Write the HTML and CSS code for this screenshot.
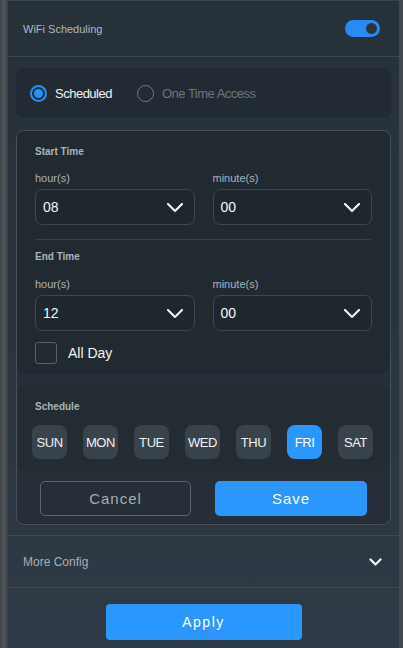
FILE: index.html
```html
<!DOCTYPE html>
<html>
<head>
<meta charset="utf-8">
<link rel="stylesheet" href="styles.css">
</head>
<body>
<div class="panel">
  <div class="header">
    <span class="header-title">WiFi Scheduling</span>
    <span class="toggle"><span class="knob"></span></span>
  </div>

  <div class="radio-box">
    <span class="radio on"><span class="dot"></span></span>
    <span class="radio-label on-label">Scheduled</span>
    <span class="radio off"></span>
    <span class="radio-label off-label">One Time Access</span>
  </div>

  <div class="card">
    <div class="times">
      <div class="sec-title">Start Time</div>
      <div class="field-row">
        <div class="field">
          <div class="field-label">hour(s)</div>
          <div class="select"><span>08</span>
            <svg width="16" height="9" viewBox="0 0 16 9"><path d="M1 1 L8 8 L15 1" fill="none" stroke="#fff" stroke-width="2" stroke-linecap="round" stroke-linejoin="round"/></svg>
          </div>
        </div>
        <div class="field">
          <div class="field-label">minute(s)</div>
          <div class="select"><span>00</span>
            <svg width="16" height="9" viewBox="0 0 16 9"><path d="M1 1 L8 8 L15 1" fill="none" stroke="#fff" stroke-width="2" stroke-linecap="round" stroke-linejoin="round"/></svg>
          </div>
        </div>
      </div>
      <div class="divider"></div>
      <div class="sec-title end">End Time</div>
      <div class="field-row">
        <div class="field">
          <div class="field-label second">hour(s)</div>
          <div class="select"><span>12</span>
            <svg width="16" height="9" viewBox="0 0 16 9"><path d="M1 1 L8 8 L15 1" fill="none" stroke="#fff" stroke-width="2" stroke-linecap="round" stroke-linejoin="round"/></svg>
          </div>
        </div>
        <div class="field">
          <div class="field-label second">minute(s)</div>
          <div class="select"><span>00</span>
            <svg width="16" height="9" viewBox="0 0 16 9"><path d="M1 1 L8 8 L15 1" fill="none" stroke="#fff" stroke-width="2" stroke-linecap="round" stroke-linejoin="round"/></svg>
          </div>
        </div>
      </div>
      <div class="check-row">
        <span class="checkbox"></span>
        <span class="check-label">All Day</span>
      </div>
    </div>

    <div class="schedule">
      <div class="sec-title">Schedule</div>
      <div class="days">
        <span class="day">SUN</span>
        <span class="day">MON</span>
        <span class="day">TUE</span>
        <span class="day">WED</span>
        <span class="day">THU</span>
        <span class="day active">FRI</span>
        <span class="day">SAT</span>
      </div>
    </div>

    <div class="actions">
      <button class="btn cancel">Cancel</button>
      <button class="btn save">Save</button>
    </div>
  </div>

  <div class="more">
    <span class="more-label">More Config</span>
    <svg width="13" height="8" viewBox="0 0 13 8"><path d="M1.5 1.5 L6.5 6.5 L11.5 1.5" fill="none" stroke="#fff" stroke-width="2.2" stroke-linecap="round" stroke-linejoin="round"/></svg>
  </div>

  <div class="apply-wrap">
    <button class="apply">Apply</button>
  </div>
</div>
</body>
</html>
```

FILE: styles.css
```css
* { box-sizing: border-box; }
html, body {
  margin: 0;
  padding: 0;
  height: 648px;
  overflow: hidden;
}
body {
  background: linear-gradient(90deg, #3b4348 0px, #4d555a 3px, #454d52 6px, #353d43 8px);
  font-family: "Liberation Sans", Arial, sans-serif;
}
.panel {
  margin-left: 8px;
  width: 391px;
  height: 648px;
  background: linear-gradient(180deg, #27313a 0%, #29343e 50%, #2e3a45 100%);
  border-top: 1px solid #3a444c;
  box-shadow: 4px 0 0 #40484e;
}
.header {
  height: 56px;
  display: flex;
  align-items: center;
  justify-content: space-between;
  padding: 0 19px 0 15px;
  border-bottom: 1px solid #3b4650;
}
.header-title {
  font-size: 11px;
  color: #aeb8c1;
}
.toggle {
  width: 35px;
  height: 17px;
  border-radius: 9px;
  background: #2a8af4;
  display: flex;
  align-items: center;
  justify-content: flex-end;
  padding-right: 3px;
}
.knob {
  width: 11px;
  height: 11px;
  border-radius: 50%;
  background: #2b343c;
}
.radio-box {
  margin: 11px 8px 0;
  height: 50px;
  border-radius: 7px;
  background: #222b33;
  display: flex;
  align-items: center;
  padding-left: 14px;
}
.radio {
  width: 17px;
  height: 17px;
  border-radius: 50%;
  display: flex;
  align-items: center;
  justify-content: center;
}
.radio.on { border: 2px solid #2a90f6; }
.dot { width: 9px; height: 9px; border-radius: 50%; background: #2a90f6; }
.radio.off { border: 1.5px solid #737c84; margin-left: 25px; }
.radio-label { font-size: 13px; margin-left: 8px; letter-spacing: -0.5px; }
.on-label { color: #f2f4f6; }
.off-label { color: #6b757e; }

.card {
  margin: 12px 8px 0;
  border: 1px solid #46515a;
  border-radius: 8px;
  background: #262f37;
  overflow: hidden;
}
.times {
  background: #212a31;
  border-radius: 0 0 9px 9px;
  padding: 14px 18px 10px;
}
.sec-title {
  font-size: 10px;
  line-height: 14px;
  font-weight: bold;
  color: #a9b4be;
}
.sec-title.end { margin-top: 10px; }
.field-row {
  display: flex;
  gap: 18px;
}
.field { width: 160px; }
.field-label {
  margin-top: 12px;
  font-size: 11px;
  line-height: 14px;
  color: #aab3bb;
}
.field-label.second { margin-top: 13px; }
.select {
  margin-top: 4px;
  height: 36px;
  border: 1px solid #3c4750;
  border-radius: 7px;
  background: #1f272e;
  display: flex;
  align-items: center;
  justify-content: space-between;
  padding: 0 11px 0 7px;
  font-size: 14px;
  color: #f4f6f8;
}
.divider {
  margin-top: 14px;
  height: 1px;
  width: 336px;
  background: #38424a;
}
.check-row {
  margin-top: 11px;
  display: flex;
  align-items: center;
}
.checkbox {
  width: 22px;
  height: 22px;
  border: 1px solid #58636c;
  border-radius: 3px;
}
.check-label {
  margin-left: 11px;
  font-size: 14px;
  color: #f2f4f6;
}

.schedule {
  margin-top: 11px;
  background: #232c33;
  border-radius: 10px;
  padding: 15px 15px 13px;
}
.schedule .sec-title { padding-left: 3px; }
.days {
  margin-top: 11px;
  display: flex;
  gap: 16px;
}
.day {
  width: 35px;
  height: 34px;
  border-radius: 8px;
  background: #39434b;
  color: #eef1f3;
  font-size: 13px;
  letter-spacing: -0.4px;
  display: flex;
  align-items: center;
  justify-content: center;
}
.day.active { background: #2b96fb; color: #fff; }

.actions {
  margin-top: 9px;
  padding: 0 23px 8px;
  display: flex;
  gap: 24px;
}
.btn {
  height: 35px;
  border-radius: 5px;
  font-family: "Liberation Sans", Arial, sans-serif;
  font-size: 15px;
  letter-spacing: 1px;
  cursor: pointer;
}
.cancel {
  width: 151px;
  background: transparent;
  border: 1px solid #5b6670;
  color: #a3adb6;
}
.save {
  width: 152px;
  background: #2b96fb;
  border: none;
  color: #fff;
}

.more {
  margin-top: 10px;
  height: 53px;
  border-top: 1px solid #3e4a55;
  border-bottom: 1px solid #3e4a55;
  display: flex;
  align-items: center;
  justify-content: space-between;
  padding: 0 17px 0 15px;
}
.more-label {
  font-size: 12px;
  color: #a6b0b9;
}
.apply-wrap {
  display: flex;
  justify-content: center;
  padding-top: 16px;
}
.apply {
  width: 196px;
  height: 36px;
  border: none;
  border-radius: 4px;
  background: #2b96fb;
  color: #fff;
  font-family: "Liberation Sans", Arial, sans-serif;
  font-size: 14px;
  letter-spacing: 1.5px;
}
```
